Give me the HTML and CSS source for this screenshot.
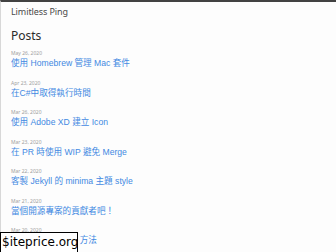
FILE: index.html
```html
<!DOCTYPE html>
<html lang="zh-Hant">
<head>
<meta charset="utf-8">
<title>Limitless Ping</title>
<link rel="stylesheet" href="styles.css">
</head>
<body>
<header class="site-header">
  <a class="site-title" href="#">Limitless Ping</a>
</header>
<main class="page-content">
  <h2 class="post-list-heading">Posts</h2>
  <ul class="post-list">
    <li><span class="post-meta">May 26, 2020</span><h3 class="post-title"><a class="post-link" href="#">使用 Homebrew 管理 Mac 套件</a></h3></li>
    <li><span class="post-meta">Apr 23, 2020</span><h3 class="post-title"><a class="post-link" href="#">在C#中取得執行時間</a></h3></li>
    <li><span class="post-meta">Mar 26, 2020</span><h3 class="post-title"><a class="post-link" href="#">使用 Adobe XD 建立 Icon</a></h3></li>
    <li><span class="post-meta">Mar 23, 2020</span><h3 class="post-title"><a class="post-link" href="#">在 PR 時使用 WIP 避免 Merge</a></h3></li>
    <li><span class="post-meta">Mar 22, 2020</span><h3 class="post-title"><a class="post-link" href="#">客製 Jekyll 的 minima 主題 style</a></h3></li>
    <li><span class="post-meta">Mar 21, 2020</span><h3 class="post-title"><a class="post-link" href="#">當個開源專案的貢獻者吧！</a></h3></li>
    <li><span class="post-meta">Mar 20, 2020</span><h3 class="post-title"><a class="post-link" href="#">JS 中的陣列 slice 方法</a></h3></li>
  </ul>
</main>
<div class="watermark">$iteprice.org</div>
</body>
</html>
```
FILE: styles.css
```css
html, body {
  margin: 0;
  padding: 0;
}
body {
  background: #fdfdfd;
  border-top: 2px solid #424242;
  border-left: 1px solid #d8d8d8;
  font-family: "Noto Sans", "Noto Sans CJK TC", sans-serif;
  color: #111;
  height: 250px;
  overflow: hidden;
  box-sizing: border-box;
}
.site-header {
  padding-left: 10px;
  height: 18px;
  display: flex;
  align-items: center;
}
.site-title {
  font-size: 9px;
  color: #4a4a4a;
  text-decoration: none;
  letter-spacing: -0.1px;
}
.page-content {
  padding: 8px 0 0 10px;
}
.post-list-heading {
  margin: 0 0 5px;
  font-size: 12px;
  line-height: 16px;
  font-weight: 400;
  color: #2a2a2a;
}
.post-list {
  list-style: none;
  margin: 0;
  padding: 0;
}
.post-list li {
  display: flex;
  flex-direction: column;
  margin-bottom: 9.5px;
}
.post-meta {
  font-size: 5px;
  line-height: 8px;
  color: #a0a0a0;
}
.post-title {
  margin: 0;
  font-family: "Liberation Sans", "Noto Sans CJK TC", sans-serif;
  font-size: 8.6px;
  line-height: 12px;
  font-weight: 400;
}
.post-link {
  color: #4289e2;
  text-decoration: none;
}
.watermark {
  position: absolute;
  left: 0;
  top: 232px;
  width: 75px;
  height: 19px;
  border: 1px solid #000;
  background: #fff;
  font-family: "DejaVu Sans", sans-serif;
  font-size: 12px;
  line-height: 19px;
  color: #000;
  padding-left: 1px;
  box-sizing: content-box;
}
```
